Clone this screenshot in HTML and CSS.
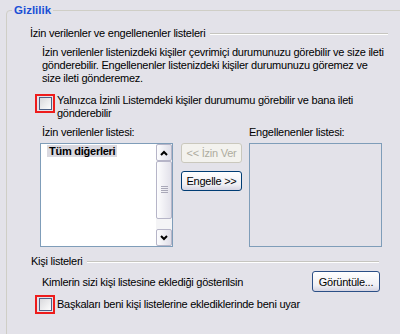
FILE: index.html
```html
<!DOCTYPE html>
<html lang="tr">
<head>
    <meta charset="UTF-8">
    <meta name="viewport" content="width=device-width, initial-scale=1.0">
    <title>Gizlilik</title>
    <link rel="stylesheet" href="styles.css">
</head>
<body>
    <fieldset class="group">
        <legend>Gizlilik</legend>
        <div class="group-body">
            <div class="section-head">
                <span>İzin verilenler ve engellenenler listeleri</span>
                <span class="rule"></span>
            </div>
            <p class="desc">İzin verilenler listenizdeki kişiler çevrimiçi durumunuzu görebilir ve size ileti<br>gönderebilir. Engellenenler listenizdeki kişiler durumunuzu göremez ve<br>size ileti gönderemez.</p>

            <label class="check-row top">
                <span class="mark"><span class="box"></span></span>
                <span class="check-text">Yalnızca İzinli Listemdeki kişiler durumumu görebilir ve bana ileti<br>gönderebilir</span>
            </label>

            <div class="lists">
                <div class="list-col">
                    <div class="list-label left">İzin verilenler listesi:</div>
                    <div class="listbox">
                        <div class="items">
                            <span class="item selected">Tüm diğerleri</span>
                        </div>
                        <div class="scrollbar">
                            <div class="sb-btn">
                                <svg width="8" height="6" viewBox="0 0 8 6"><polyline points="1,5 4,2 7,5" fill="none" stroke="#000" stroke-width="2"/></svg>
                            </div>
                            <div class="sb-thumb">
                                <svg width="7" height="8" viewBox="0 0 7 8">
                                    <line x1="0" y1="0.5" x2="7" y2="0.5" stroke="#a9a8b8"/>
                                    <line x1="0" y1="2.5" x2="7" y2="2.5" stroke="#a9a8b8"/>
                                    <line x1="0" y1="4.5" x2="7" y2="4.5" stroke="#a9a8b8"/>
                                    <line x1="0" y1="6.5" x2="7" y2="6.5" stroke="#a9a8b8"/>
                                </svg>
                            </div>
                            <div class="sb-track"></div>
                            <div class="sb-btn">
                                <svg width="8" height="6" viewBox="0 0 8 6"><polyline points="1,1 4,4 7,1" fill="none" stroke="#000" stroke-width="2"/></svg>
                            </div>
                        </div>
                    </div>
                </div>

                <div class="mid-buttons">
                    <button class="btn" disabled>&lt;&lt; İzin Ver</button>
                    <button class="btn">Engelle &gt;&gt;</button>
                </div>

                <div class="list-col">
                    <div class="list-label">Engellenenler listesi:</div>
                    <div class="listbox empty"></div>
                </div>
            </div>

            <div class="section-head second">
                <span>Kişi listeleri</span>
                <span class="rule"></span>
            </div>
            <div class="view-row">
                <span>Kimlerin sizi kişi listesine eklediği gösterilsin</span>
                <button class="btn view-btn">Görüntüle...</button>
            </div>

            <label class="check-row bottom">
                <span class="mark"><span class="box"></span></span>
                <span class="check-text">Başkaları beni kişi listelerine eklediklerinde beni uyar</span>
            </label>
        </div>
    </fieldset>
</body>
</html>
```

FILE: styles.css
```css
* {
    box-sizing: border-box;
}
body {
    margin: 0;
    width: 400px;
    height: 334px;
    overflow: hidden;
    background: #e3e2e9;
    color: #000;
    font-family: "Liberation Sans", Arial, sans-serif;
    font-size: 11px;
    letter-spacing: -0.25px;
}
.group {
    margin: 4px -12px 0 6px;
    padding: 0;
    min-height: 400px;
    border: 1px solid #cfcec6;
    border-radius: 4px;
}
.group legend {
    margin-left: 5px;
    padding: 0 2px;
    line-height: 13px;
    font-size: 11.5px;
    font-weight: bold;
    letter-spacing: 0;
    color: #1a4fd6;
}
.group-body {
    padding: 10px 23px 0 23px;
}
.section-head {
    display: flex;
    align-items: center;
    height: 13px;
    line-height: 13px;
}
.section-head .rule {
    flex: 1;
    margin-left: 5px;
    border-top: 1px solid #c6c5c0;
    border-bottom: 1px solid #fff;
}
.section-head.second {
    margin-top: 8px;
    padding-left: 1px;
}
.section-head.second .rule {
    margin-left: 4px;
    margin-right: 9px;
}
.desc {
    margin: 6px 0 0 12px;
    line-height: 13px;
}
.check-row {
    display: flex;
    margin-left: 5px;
    line-height: 13px;
}
.check-row.top {
    margin-top: 9px;
    align-items: flex-start;
}
.check-row.bottom {
    margin-top: 3px;
    align-items: center;
}
.mark {
    display: flex;
    align-items: center;
    justify-content: center;
    width: 20px;
    height: 19px;
    margin-right: 2px;
    border: 2px solid #ee1c1c;
}
.check-row.top .mark {
    margin-top: 0;
}
.box {
    width: 13px;
    height: 13px;
    border: 1px solid #4d6185;
    background: linear-gradient(135deg, #d9d9dc, #fdfdfd);
}
.lists {
    display: flex;
    margin: 5px 0 0 10px;
}
.list-col {
    width: 133px;
}
.list-label {
    line-height: 14px;
    margin-bottom: 4px;
}
.list-label.left {
    padding-left: 2px;
}
.listbox {
    display: flex;
    height: 104px;
    border: 1px solid #7f9db9;
    background: #fff;
}
.listbox.empty {
    background: transparent;
}
.items {
    flex: 1;
}
.item {
    display: inline-block;
    margin: 1px 0 0 6px;
    padding: 0 2px;
    line-height: 12px;
    font-weight: bold;
}
.item.selected {
    background: #dad9e0;
}
.scrollbar {
    display: flex;
    flex-direction: column;
    width: 16px;
    background: #f4f4f6;
}
.sb-btn {
    display: flex;
    align-items: center;
    justify-content: center;
    height: 17px;
    border: 1px solid #b6b5c8;
    border-radius: 2px;
    background: linear-gradient(to right, #fdfdfe, #dfdee8);
}
.sb-thumb {
    display: flex;
    align-items: center;
    justify-content: center;
    height: 58px;
    border: 1px solid #b6b5c8;
    border-radius: 2px;
    background: linear-gradient(to right, #fdfdfe, #e2e1ea);
}
.sb-track {
    flex: 1;
}
.mid-buttons {
    display: flex;
    flex-direction: column;
    gap: 8px;
    width: 61px;
    margin: 0 7px 0 8px;
    padding-top: 18px;
}
.btn {
    height: 20px;
    padding: 0;
    border: 1px solid #003c74;
    border-radius: 3px;
    background: linear-gradient(#ffffff, #efeff4 70%, #d5d4e2);
    font-family: inherit;
    font-size: 11px;
    letter-spacing: -0.25px;
    color: #000;
}
.btn:disabled {
    border-color: #cac8bd;
    background: #f3f2ee;
    color: #aeac9f;
}
.view-row {
    display: flex;
    align-items: center;
    justify-content: space-between;
    margin: 3px 8px 0 12px;
}
.view-btn {
    width: 68px;
    height: 21px;
    border-color: #2b4f86;
}
```
